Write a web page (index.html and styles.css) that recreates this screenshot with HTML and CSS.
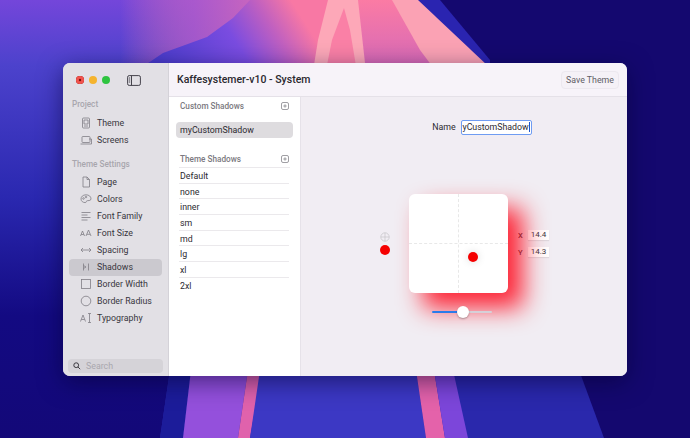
FILE: index.html
```html
<!DOCTYPE html>
<html>
    <head>
        <meta charset="utf-8">
        <title>Kaffesystemer-v10 - System</title>
        <link rel="stylesheet" href="styles.css">
    </head>
    <body>
        <svg class="wallpaper" viewBox="0 0 690 438" preserveAspectRatio="none">
            <defs>
                <linearGradient id="sky" x1="0" y1="0" x2="0" y2="1">
                    <stop offset="0" stop-color="#7446da"/>
                    <stop offset="0.15" stop-color="#4c42cc"/>
                    <stop offset="0.45" stop-color="#2a28b0"/>
                    <stop offset="0.72" stop-color="#130a82"/>
                    <stop offset="1" stop-color="#130878"/>
                </linearGradient>
                <linearGradient id="fade" x1="0" y1="0" x2="1" y2="0">
                    <stop offset="0" stop-color="#fb7ba4" stop-opacity="0"/>
                    <stop offset="0.35" stop-color="#c060c8" stop-opacity=".7"/>
                    <stop offset="1" stop-color="#fb7ba4"/>
                </linearGradient>
                <linearGradient id="flank" gradientUnits="userSpaceOnUse" x1="170" y1="82" x2="300" y2="0">
                    <stop offset="0" stop-color="#4a3ccc"/>
                    <stop offset="0.5" stop-color="#7a4ce0"/>
                    <stop offset="0.75" stop-color="#c060c0"/>
                    <stop offset="0.95" stop-color="#f878a4"/>
                </linearGradient>
                <linearGradient id="dusk" x1="0" y1="0" x2="1" y2="0">
                    <stop offset="0" stop-color="#14086f" stop-opacity="0"/>
                    <stop offset="1" stop-color="#14086f"/>
                </linearGradient>
                <linearGradient id="fall" x1="0" y1="0" x2="0" y2="1">
                    <stop offset="0" stop-color="#fb7ba4"/>
                    <stop offset="1" stop-color="#d468b8"/>
                </linearGradient>
            </defs>
            <rect width="690" height="438" fill="#14086f"/>
            <rect width="340" height="438" fill="url(#sky)"/>
            <rect x="330" width="100" height="438" fill="url(#dusk)"/>
            <polygon points="416,0 440,0 490,60 490,70 470,70" fill="#2a24b0"/>
            <polygon points="120,0 330,0 330,70 120,70" fill="url(#fade)"/>
            <polygon points="330,0 395,0 488,70 330,70" fill="url(#fall)"/>
            <polygon points="250,0 233,18 207,37 163,53 120,82 312,82 328,0" fill="url(#flank)"/>
            <polygon points="392,0 418,0 488,66 490,90 450,90 420,50" fill="#fba2b4"/>
            <polygon points="328,0 358,0 368,90 310,90 318,40" fill="#fda8b8"/>
            <polygon points="344,8 350,30 360,90 322,90 332,40" fill="#fa80a6"/>
            <polygon points="170,370 579,370 604,438 160,438" fill="#2a28ac"/>
            <polygon points="170,370 191,370 183,438 160,438" fill="#1c1c9a"/>
            <polygon points="191,370 248,370 238,438 183,438" fill="#9450dc"/>
            <polygon points="248,370 262,370 250,438 238,438" fill="#e062ac"/>
            <polygon points="260,370 416,370 426,438 250,438" fill="#3c38c4"/>
            <polygon points="416,370 434,370 445,438 426,438" fill="#e462aa"/>
            <polygon points="434,370 453,370 468,438 445,438" fill="#7c46da"/>
        </svg>

        <div class="window">
            <aside class="sidebar">
                <div class="traffic">
                    <i class="light red"></i><i class="light amber"></i><i class="light green"></i>
                    <svg class="toggle" viewBox="0 0 14 11"><rect x=".6" y=".6" width="12.8" height="9.8" rx="1.6"/><path d="M4.5 .6v9.8M1.8 3h1.4M1.8 5h1.4M1.8 7h1.4"/></svg>
                </div>
                <div class="side-scroll">
                    <div class="side-label">Project</div>
                    <a class="side-item"><svg viewBox="0 0 12 12"><rect x="2.5" y="1" width="7" height="10" rx="1"/><path d="M4 3h4v4H4zM4 9h4"/></svg>Theme</a>
                    <a class="side-item"><svg viewBox="0 0 12 12"><rect x="2" y="2.5" width="8" height="6" rx=".8"/><path d="M.5 10h11M9 5h2.5v5"/></svg>Screens</a>
                    <div class="side-label second">Theme Settings</div>
                    <a class="side-item"><svg viewBox="0 0 12 12"><path d="M3 1h4l2.5 2.5V11H3zM7 1v2.500h2.500"/></svg>Page</a>
                    <a class="side-item"><svg viewBox="0 0 12 12"><path d="M6 1.800C2.800 1.800 1 3.800 1 6s2 3.600 4.200 3.600c1.300 0 1-1.200 1.500-1.700.7-.7 4.300.4 4.300-2C11 3.400 8.800 1.800 6 1.800z"/><circle cx="3.500" cy="5.500" r=".8"/><circle cx="6" cy="4" r=".8"/></svg>Colors</a>
                    <a class="side-item"><svg viewBox="0 0 12 12"><path d="M1.500 2.500h9M1.500 5h6M1.500 7.500h9M1.500 10h6"/></svg>Font Family</a>
                    <a class="side-item"><svg viewBox="0 0 12 12"><path d="M.5 9 2.500 4l2 5M1.200 7.500h2.600M6 9 8.500 3l2.500 6M7 7.300h3"/></svg>Font Size</a>
                    <a class="side-item"><svg viewBox="0 0 12 12"><path d="M1 6h10M3 4 1 6l2 2M9 4l2 2-2 2"/></svg>Spacing</a>
                    <a class="side-item active"><svg viewBox="0 0 12 12"><path d="M3.500 2.500v7M8.500 2.500v7M3.500 4.500 6 6 3.500 7.500"/></svg>Shadows</a>
                    <a class="side-item"><svg viewBox="0 0 12 12"><rect x="1.500" y="1.500" width="9" height="9"/></svg>Border Width</a>
                    <a class="side-item"><svg viewBox="0 0 12 12"><circle cx="6" cy="6" r="4.800"/></svg>Border Radius</a>
                    <a class="side-item"><svg viewBox="0 0 12 12"><path d="M.5 9.500 3 3l2.500 6.500M1.400 7.500h3.200M8 1.500h3M8 10.500h3M9.500 1.500v9"/></svg>Typography</a>
                </div>
                <div class="search">
                    <div class="search-box">
                        <svg viewBox="0 0 10 10"><circle cx="4" cy="4" r="3"/><path d="M6.300 6.300 9 9"/></svg>
                        <span>Search</span>
                    </div>
                </div>
            </aside>

            <div class="content">
                <header class="titlebar">
                    <h1>Kaffesystemer-v10 - System</h1>
                    <button class="save">Save Theme</button>
                </header>
                <div class="panes">
                    <section class="list-pane">
                        <div class="list-head">
                            <span>Custom Shadows</span>
                            <svg class="plus" viewBox="0 0 8 8"><rect x=".5" y=".5" width="7" height="7" rx="1.500"/><path d="M4 2.300v3.400M2.300 4h3.400"/></svg>
                        </div>
                        <div class="custom-row">myCustomShadow</div>
                        <div class="list-head theme-head">
                            <span>Theme Shadows</span>
                            <svg class="plus" viewBox="0 0 8 8"><rect x=".5" y=".5" width="7" height="7" rx="1.500"/><path d="M4 2.300v3.400M2.300 4h3.400"/></svg>
                        </div>
                        <ul class="theme-list">
                            <li>Default</li>
                            <li>none</li>
                            <li>inner</li>
                            <li>sm</li>
                            <li>md</li>
                            <li>lg</li>
                            <li>xl</li>
                            <li>2xl</li>
                        </ul>
                    </section>
                    <main class="editor">
                        <div class="name-row">
                            <label>Name</label>
                            <div class="name-input"><span>yCustomShadow</span></div>
                        </div>
                        <div class="stage">
                            <div class="swatches">
                                <svg class="add" viewBox="0 0 10 10"><circle cx="5" cy="5" r="4.200"/><path d="M5 .8v8.400M.8 5h8.400"/></svg>
                                <i class="red-dot"></i>
                            </div>
                            <div class="pad">
                                <i class="axis-x"></i>
                                <i class="axis-y"></i>
                                <i class="handle"></i>
                            </div>
                            <div class="coords">
                                <div class="coord"><b>X</b><span>14.4</span></div>
                                <div class="coord"><b>Y</b><span>14.3</span></div>
                            </div>
                            <div class="slider"><i class="fill"></i><i class="thumb"></i></div>
                        </div>
                    </main>
                </div>
            </div>
        </div>
    </body>
</html>
```

FILE: styles.css
```css
*{margin:0;padding:0;box-sizing:border-box;}
html,body{height:100%;overflow:hidden;}
body{padding:63px;background:#14086f;font-family:"Roboto","Liberation Sans",sans-serif;color:#2c2a30;font-size:8.800px;}
ul{list-style:none;}
.wallpaper{position:absolute;top:0;left:0;width:690px;height:438px;}

.window{position:relative;display:flex;width:564px;height:313px;border-radius:7px;overflow:hidden;background:#f1edf3;box-shadow:0 6px 24px rgba(5,0,50,.55);}

.sidebar{display:flex;flex-direction:column;width:106px;background:#e2e0e5;border-right:1px solid #d4d2d8;}
.traffic{display:flex;align-items:center;height:34px;padding-left:13px;gap:5px;}
.light{display:block;width:8px;height:8px;border-radius:50%;}
.red{background:#f2544e;box-shadow:inset 0 0 0 2.8px #f2544e,inset 0 0 0 8px #7a1410;}
.amber{background:#f5b42e;}
.green{background:#2ec440;}
.toggle{width:14px;height:11px;margin-left:12px;fill:none;stroke:#45434c;stroke-width:1;}
.side-scroll{flex:1;}
.side-label{height:15px;line-height:15px;margin-bottom:2px;padding-left:9px;font-size:8.200px;font-weight:500;color:#a8a6ad;}
.side-label.second{margin-top:8.500px;}
.side-item{display:flex;align-items:center;height:17px;margin:0 6px;padding-left:11px;gap:5px;font-size:8.800px;color:#38363d;border-radius:4px;}
.side-item svg{width:12px;height:12px;flex:none;fill:none;stroke:#807e85;stroke-width:.8;}
.side-item.active{background:#cbc9cf;}
.search{padding:0 5px 3px;}
.search-box{display:flex;align-items:center;height:14px;padding-left:5px;gap:5px;background:#d5d3d8;border-radius:4px;color:#a9a7ae;font-size:8.800px;}
.search-box svg{width:8px;height:8px;fill:none;stroke:#35333a;stroke-width:1.200;}

.content{flex:1;display:flex;flex-direction:column;min-width:0;}
.titlebar{display:flex;align-items:center;justify-content:space-between;height:34px;padding:0 8px;background:#f7f3f9;border-bottom:1px solid #e5e1e8;}
.titlebar h1{font-size:10.500px;font-weight:500;color:#2a282e;}
.save{height:18px;padding:0 4px;border:1px solid #ece8ef;border-radius:4px;background:#f5f1f7;font:400 8.800px "Roboto","Liberation Sans",sans-serif;color:#5f5d65;}
.panes{flex:1;display:flex;min-height:0;}

.list-pane{width:132px;padding:0 10px 0 7px;background:#fff;border-right:1px solid #e6e2e9;}
.list-head{display:flex;align-items:center;justify-content:space-between;height:18px;padding:0 1px 0 4px;font-size:8.200px;font-weight:500;color:#7b7980;}
.plus{width:8px;height:8px;fill:none;stroke:#77757c;stroke-width:.7;}
.custom-row{height:16px;line-height:16px;margin:7px -3px 0 0;padding-left:4px;background:#dedcdf;border-radius:4px;font-size:8.800px;color:#2c2a30;}
.theme-head{height:17px;margin:13px 0 0 3px;padding-left:1px;border-bottom:1px solid #ebe9ec;}
.theme-list{margin:0 1px 0 3px;}
.theme-list li{height:15.700px;line-height:16px;padding-left:1px;font-size:8.800px;border-bottom:1px solid #ebe9ec;}
.theme-list li:last-child{border-bottom:0;}

.editor{flex:1;display:flex;flex-direction:column;align-items:center;background:#f1edf3;}
.name-row{display:flex;align-items:center;gap:5px;margin:22.500px 0 0 36px;}
.name-row label{font-size:8.800px;color:#2c2a30;}
.name-input{width:71px;height:15px;display:flex;align-items:center;justify-content:flex-end;background:#fff;border:1.500px solid #6f9cf2;border-radius:2px;font-size:8.800px;white-space:nowrap;padding-right:1px;}
.name-input span{border-right:1px solid #1e55c8;}

.stage{display:grid;grid-template-columns:10px 99px 31px;column-gap:19px;row-gap:18px;align-items:center;margin-top:59.500px;margin-left:10px;}
.swatches{display:flex;flex-direction:column;align-items:center;gap:3px;}
.add{width:10px;height:10px;fill:none;stroke:#c6c4c9;stroke-width:.7;}
.red-dot{display:block;width:10px;height:10px;border-radius:50%;background:#f50000;}
.pad{position:relative;width:99px;height:99px;background:#fff;border-radius:6px;box-shadow:14.400px 14.300px 24px rgba(255,0,20,.85);}
.axis-x{position:absolute;left:0;right:0;top:49px;border-top:1px dashed #e8e8e8;}
.axis-y{position:absolute;top:0;bottom:0;left:49px;border-left:1px dashed #e8e8e8;}
.handle{position:absolute;left:59px;top:58px;width:10px;height:10px;border-radius:50%;background:#f50000;box-shadow:0 0 8px rgba(0,0,0,.15);}
.coords{display:flex;flex-direction:column;gap:6.500px;margin-left:-9px;}
.coord{display:flex;align-items:center;gap:6px;}
.coord b{width:4px;font-size:7.500px;font-weight:500;color:#44424a;}
.coord span{width:21px;height:10.500px;line-height:10.500px;text-align:center;background:#fff;font-size:8px;color:#3a383f;box-shadow:0 1px 1px rgba(0,0,0,.08);}
.slider{position:relative;grid-column:2;width:60px;height:2px;margin-left:22.500px;background:#d6d0d8;border-radius:1px;}
.fill{position:absolute;left:0;top:0;bottom:0;width:31px;background:#2b7bea;border-radius:1px;}
.thumb{position:absolute;left:25px;top:-5px;width:12px;height:12px;border-radius:50%;background:#fff;box-shadow:0 1px 2px rgba(0,0,0,.3);}
```
